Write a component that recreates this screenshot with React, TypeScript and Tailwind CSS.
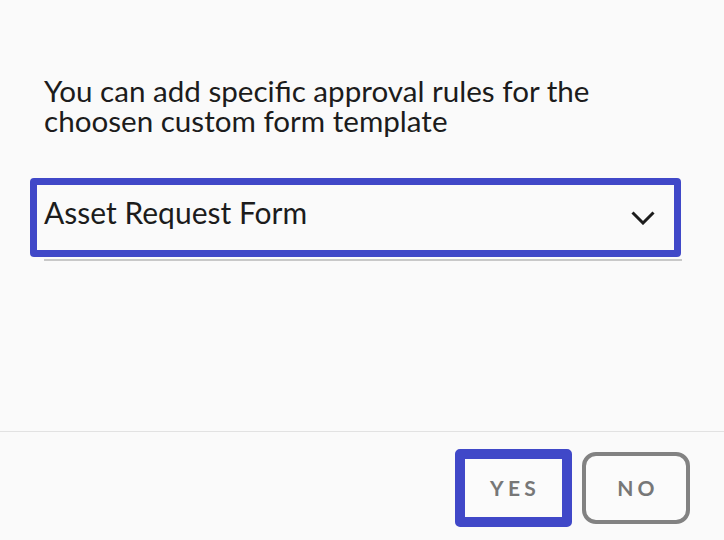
import * as React from "react";

export default function App() {
  return (
    <div
      className="w-[724px] h-[540px] bg-[#fafafa] flex flex-col text-[#1c1c1c]"
      style={{ fontFamily: "Lato, 'Open Sans', sans-serif" }}
    >
      <div className="flex-1 pt-[76px] pl-[30px] pr-[43px]">
        <p className="pl-[14px] text-[29.6px] leading-[30px]">
          You can add specific approval rules for the
          <br />
          choosen custom form template
        </p>

        <div className="mt-[42px]">
          <div className="h-[79px] w-[651px] border-[7px] border-[#4048c8] rounded-[4px] flex items-center pl-[7px] pr-[19px]">
            <span className="flex-1 text-[30px] leading-[30px] mb-[12px]">Asset Request Form</span>
            <svg width="24" height="14" viewBox="0 0 24 14" fill="none" className="mt-[1px]">
              <polyline points="1.5,1.5 12,12 22.5,1.5" stroke="#1c1c1c" strokeWidth="3" />
            </svg>
          </div>
          <div className="ml-[14px] mt-[2px] h-[2px] w-[638px] bg-[#c8c8c8]" />
        </div>
      </div>

      <div className="h-[109px] border-t border-[#e2e2e2] flex items-center justify-end gap-[10px] pt-[4px] pr-[34px]">
        <button className="w-[117px] h-[78px] border-[10px] border-[#4048c8] rounded-[5px] bg-[#fbfbfb] text-[21px] font-bold tracking-[0.2em] text-[#777] pl-[3px]">
          YES
        </button>
        <button className="w-[108px] h-[72px] border-[4px] border-[#828282] rounded-[14px] bg-[#fbfbfb] text-[21px] font-bold tracking-[0.2em] text-[#777] pl-[4px]">
          NO
        </button>
      </div>
    </div>
  );
}
